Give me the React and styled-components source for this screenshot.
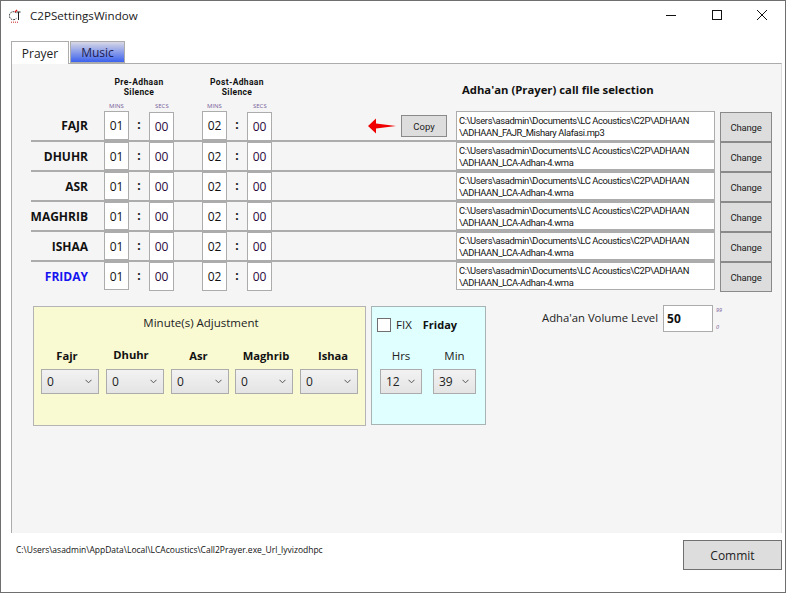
import React from 'react';
import styled, { createGlobalStyle } from 'styled-components';

const PATH_ROOT = 'C:\\Users\\asadmin\\Documents\\LC Acoustics\\C2P\\ADHAAN';
const DEFAULT_FILE = '\\ADHAAN_LCA-Adhan-4.wma';

const prayers = [
  { name: 'FAJR', file: '\\ADHAAN_FAJR_Mishary Alafasi.mp3', first: true },
  { name: 'DHUHR', file: DEFAULT_FILE },
  { name: 'ASR', file: DEFAULT_FILE },
  { name: 'MAGHRIB', file: DEFAULT_FILE },
  { name: 'ISHAA', file: DEFAULT_FILE },
  { name: 'FRIDAY', file: DEFAULT_FILE, friday: true, last: true },
];

const adjustments = [
  { name: 'Fajr', shift: -6 },
  { name: 'Dhuhr', shift: -8, raised: true },
  { name: 'Asr', shift: -3 },
  { name: 'Maghrib', shift: 4, tight: true },
  { name: 'Ishaa', shift: 8 },
];

export default function App() {
  return (
    <>
      <GlobalStyle />
      <Window>
        <TitleBar>
          <AppIcon viewBox="0 0 14 14">
            <path d="M7.5 4.2A4 4 0 1 0 7.5 9.2" fill="none" stroke="#222" strokeWidth="1" strokeDasharray="1.6 1" />
            <path d="M7.5 3h4M9.5 3v8" stroke="#222" strokeWidth="1" fill="none" />
            <path d="M6 3.2L8 0.8" stroke="#e01010" strokeWidth="1.3" />
            <path d="M2 13.2h7" stroke="#c82020" strokeWidth="1" strokeDasharray="1 1" />
          </AppIcon>
          <Title>C2PSettingsWindow</Title>
          <WindowButtons>
            <svg width="12" height="12" viewBox="0 0 12 12">
              <path d="M1 6.5h10" stroke="#111" strokeWidth="1" />
            </svg>
            <svg width="12" height="12" viewBox="0 0 12 12">
              <rect x="1.5" y="1.5" width="9" height="9" fill="none" stroke="#111" strokeWidth="1" />
            </svg>
            <svg width="12" height="12" viewBox="0 0 12 12">
              <path d="M1 1l10 10M11 1L1 11" stroke="#111" strokeWidth="1" />
            </svg>
          </WindowButtons>
        </TitleBar>

        <Tabs>
          <Tab $active>Prayer</Tab>
          <Tab>Music</Tab>
        </Tabs>

        <Panel>
          <Headings>
            <SilenceHeading>Pre-Adhaan<br />Silence</SilenceHeading>
            <SilenceHeading>Post-Adhaan<br />Silence</SilenceHeading>
            <FileHeading>Adha'an (Prayer) call file selection</FileHeading>
          </Headings>

          <Units>
            <Unit $width={46}>MINS</Unit>
            <Unit $width={52}>SECS</Unit>
            <Unit $width={46}>MINS</Unit>
            <Unit $width={45}>SECS</Unit>
          </Units>

          {prayers.map((p) => (
            <Row key={p.name} $first={p.first}>
              <RowMain $last={p.last}>
                <PrayerName $friday={p.friday}>{p.name}</PrayerName>
                <MinsBox $first={p.first} $gapLeft={16}>01</MinsBox>
                <Colon>:</Colon>
                <SecsBox $first={p.first}>00</SecsBox>
                <MinsBox $gapLeft={28} $tall>02</MinsBox>
                <Colon>:</Colon>
                <SecsBox $first={p.first}>00</SecsBox>
                {p.first && (
                  <CopyGroup>
                    <svg width="29" height="16" viewBox="0 0 29 16">
                      <path d="M0 8L8 0.5V5.5L28 8L8 10.5V15.5Z" fill="#f00000" />
                    </svg>
                    <CopyButton>Copy</CopyButton>
                  </CopyGroup>
                )}
                <PathBox $first={p.first}>
                  {PATH_ROOT}
                  <br />
                  {p.file}
                </PathBox>
              </RowMain>
              <ChangeButton $first={p.first}>Change</ChangeButton>
            </Row>
          ))}

          <Lower>
            <AdjustPanel>
              <AdjustTitle>Minute(s) Adjustment</AdjustTitle>
              <AdjustColumns>
                {adjustments.map((a) => (
                  <AdjustColumn key={a.name} $tight={a.tight}>
                    <AdjustLabel $raised={a.raised} $shift={a.shift}>{a.name}</AdjustLabel>
                    <Select $width={58}>
                      0<Chevron />
                    </Select>
                  </AdjustColumn>
                ))}
              </AdjustColumns>
            </AdjustPanel>

            <FixPanel>
              <FixRow>
                <CheckBox />
                <FixText>FIX</FixText>
                <FridayText>Friday</FridayText>
              </FixRow>
              <FixColumns>
                <FixColumn>
                  <FixLabel>Hrs</FixLabel>
                  <Select $width={42}>
                    12<Chevron />
                  </Select>
                </FixColumn>
                <FixColumn>
                  <FixLabel>Min</FixLabel>
                  <Select $width={43}>
                    39<Chevron />
                  </Select>
                </FixColumn>
              </FixColumns>
            </FixPanel>

            <Volume>
              <VolumeLabel>Adha'an Volume Level</VolumeLabel>
              <VolumeBox>50</VolumeBox>
              <VolumeRange>
                <span>99</span>
                <span>0</span>
              </VolumeRange>
            </Volume>
          </Lower>
        </Panel>

        <Footer>
          <FooterPath>C:\Users\asadmin\AppData\Local\LCAcoustics\Call2Prayer.exe_Url_lyvizodhpc</FooterPath>
          <CommitButton>Commit</CommitButton>
        </Footer>
      </Window>
    </>
  );
}

const Chevron = () => (
  <ChevronIcon width="7" height="5" viewBox="0 0 7 5">
    <path d="M0.5 0.8L3.5 3.8L6.5 0.8" fill="none" stroke="#555" strokeWidth="1" />
  </ChevronIcon>
);

const GlobalStyle = createGlobalStyle`
  html, body {
    margin: 0;
    padding: 0;
    background: #fff;
  }
  * {
    box-sizing: border-box;
  }
`;

const Window = styled.div`
  width: 786px;
  height: 593px;
  display: flex;
  flex-direction: column;
  background: #fff;
  border: 1px solid #6f6f6f;
  font-family: 'Open Sans', 'Liberation Sans', sans-serif;
  color: #111;
  overflow: hidden;
`;

const TitleBar = styled.div`
  height: 30px;
  display: flex;
  align-items: center;
  padding: 0 0 1px 8px;
  flex-shrink: 0;
`;

const AppIcon = styled.svg`
  width: 14px;
  height: 14px;
`;

const Title = styled.div`
  margin-left: 7px;
  font-size: 11.6px;
  color: #1a1a1a;
`;

const WindowButtons = styled.div`
  margin: -1px 0 0 auto;
  display: flex;
  gap: 33.5px;
  padding-right: 17px;
`;

const Tabs = styled.div`
  height: 32px;
  display: flex;
  align-items: flex-end;
  padding: 10px 0 0 10px;
  gap: 1px;
  flex-shrink: 0;
`;

const Tab = styled.div`
  height: ${(p) => (p.$active ? '23px' : '22px')};
  width: ${(p) => (p.$active ? '58px' : '55px')};
  margin-bottom: ${(p) => (p.$active ? '-1px' : '0')};
  display: flex;
  align-items: center;
  justify-content: center;
  font-size: 12px;
  color: ${(p) => (p.$active ? '#222' : '#1c1c50')};
  background: ${(p) => (p.$active ? '#fff' : 'linear-gradient(#d8d8e4, #3c62ee)')};
  border: 1px solid #acacac;
  border-bottom: ${(p) => (p.$active ? 'none' : '1px solid #acacac')};
  position: relative;
  z-index: 1;
`;

const Panel = styled.div`
  height: 470px;
  margin: 0 3px 0 10px;
  padding: 13px 0 0 0;
  background: #f5f5f5;
  border: 1px solid #acacac;
  border-bottom: none;
  border-right-color: #dcdcdc;
  flex-shrink: 0;
`;

const Headings = styled.div`
  display: flex;
  align-items: flex-start;
  height: 24px;
  padding-left: 78px;
`;

const SilenceHeading = styled.div`
  width: 98px;
  text-align: center;
  font-family: 'Roboto', 'Liberation Sans', sans-serif;
  font-size: 8.5px;
  line-height: 10px;
  font-weight: 700;
  color: #111;
  letter-spacing: 0.35px;
`;

const FileHeading = styled.div`
  margin-left: 176px;
  margin-top: 5px;
  font-size: 11.3px;
  font-weight: 700;
  line-height: 16px;
  color: #111;
`;

const Units = styled.div`
  display: flex;
  height: 10px;
  padding-left: 92px;
`;

const Unit = styled.div`
  width: ${(p) => p.$width}px;
  font-size: 6px;
  line-height: 10px;
  color: #75609a;
  padding-left: 5px;
`;

const Row = styled.div`
  display: flex;
  align-items: flex-start;
  height: ${(p) => (p.$first ? '31px' : '30px')};
  padding-left: 19px;
`;

const RowMain = styled.div`
  width: 684px;
  height: 100%;
  display: flex;
  align-items: flex-start;
  border-bottom: ${(p) => (p.$last ? 'none' : '2px solid #acacac')};
`;

const PrayerName = styled.div`
  width: 57px;
  height: 28px;
  display: flex;
  align-items: center;
  justify-content: flex-end;
  font-size: 12px;
  font-weight: 700;
  white-space: nowrap;
  color: ${(p) => (p.$friday ? '#1414f0' : '#111')};
`;

const TimeBox = styled.div`
  width: 25px;
  background: #fff;
  border: 1px solid #acacac;
  display: flex;
  align-items: center;
  justify-content: center;
  font-size: 12px;
`;

const MinsBox = styled(TimeBox)`
  height: ${(p) => (p.$first || p.$tall ? '29px' : '28px')};
  margin-left: ${(p) => p.$gapLeft}px;
`;

const SecsBox = styled(TimeBox)`
  height: 29px;
  margin-top: ${(p) => (p.$first ? '1px' : '0')};
  color: #2a0a3c;
`;

const Colon = styled.div`
  width: 20px;
  height: 27px;
  display: flex;
  align-items: center;
  justify-content: center;
  font-size: 12px;
  font-weight: 700;
`;

const CopyGroup = styled.div`
  display: flex;
  align-items: center;
  margin: 4px 0 0 96px;
  gap: 4px;
`;

const CopyButton = styled.div`
  width: 46px;
  height: 22px;
  display: flex;
  align-items: center;
  justify-content: center;
  background: #dddddd;
  border: 1px solid #8a8a8a;
  font-family: 'Roboto', 'Liberation Sans', sans-serif;
  font-size: 9.5px;
  color: #222;
`;

const PathBox = styled.div`
  width: 259px;
  height: ${(p) => (p.$first ? '30px' : '28px')};
  margin-left: ${(p) => (p.$first ? '9px' : 'auto')};
  padding: ${(p) => (p.$first ? '3px' : '2px')} 0 0 2px;
  background: #fff;
  border: 1px solid #acacac;
  font-family: 'Roboto', 'Liberation Sans', sans-serif;
  font-size: 9.4px;
  line-height: 12px;
  letter-spacing: -0.38px;
  color: #111;
  white-space: nowrap;
`;

const ChangeButton = styled.div`
  width: 52px;
  height: 30px;
  margin: ${(p) => (p.$first ? '1px' : '0')} 0 0 5px;
  display: flex;
  align-items: center;
  justify-content: center;
  background: #dddddd;
  border: 1px solid #8a8a8a;
  font-family: 'Roboto', 'Liberation Sans', sans-serif;
  font-size: 9.5px;
  letter-spacing: -0.2px;
  color: #222;
`;

const Lower = styled.div`
  display: flex;
  align-items: flex-start;
  margin-top: 14px;
  padding-left: 21px;
`;

const AdjustPanel = styled.div`
  width: 333px;
  height: 120px;
  background: #f9f9d2;
  border: 1px solid #b4b4b4;
  padding: 8px 7px 0;
`;

const AdjustTitle = styled.div`
  text-align: center;
  padding-left: 3px;
  font-size: 11.5px;
  line-height: 16px;
  color: #222;
`;

const AdjustColumns = styled.div`
  display: flex;
  gap: 7px;
  margin-top: 17px;
`;

const AdjustColumn = styled.div`
  width: 58px;
  margin-left: ${(p) => (p.$tight ? '-1px' : '0')};
  display: flex;
  flex-direction: column;
  align-items: center;
`;

const AdjustLabel = styled.div`
  height: 16px;
  line-height: 16px;
  margin: ${(p) => (p.$raised ? '-1px 0 6px' : '0 0 5px')};
  margin-left: ${(p) => p.$shift}px;
  font-size: 11.2px;
  font-weight: 700;
  white-space: nowrap;
`;

const Select = styled.div`
  width: ${(p) => p.$width}px;
  height: 25px;
  display: flex;
  align-items: center;
  justify-content: space-between;
  padding: 0 6px 0 5px;
  background: linear-gradient(#f2f2f2, #e4e4e4);
  border: 1px solid #acacac;
  font-size: 12px;
  color: #222;
`;

const ChevronIcon = styled.svg`
  flex-shrink: 0;
`;

const FixPanel = styled.div`
  width: 115px;
  height: 119px;
  margin-left: 5px;
  background: #e0ffff;
  border: 1px solid #a8b4b4;
  padding: 11px 0 0 5px;
`;

const FixRow = styled.div`
  display: flex;
  align-items: center;
  height: 14px;
`;

const CheckBox = styled.div`
  width: 14px;
  height: 14px;
  background: #fff;
  border: 1px solid #707070;
`;

const FixText = styled.div`
  margin: -2px 0 0 5px;
  font-size: 11.5px;
  color: #222;
`;

const FridayText = styled.div`
  margin: -2px 0 0 11px;
  font-size: 11px;
  font-weight: 700;
`;

const FixColumns = styled.div`
  display: flex;
  gap: 11px;
  margin: 16px 0 0 3px;
`;

const FixColumn = styled.div`
  display: flex;
  flex-direction: column;
  align-items: center;
`;

const FixLabel = styled.div`
  height: 16px;
  line-height: 16px;
  margin-bottom: 5px;
  font-size: 11.5px;
  color: #222;
`;

const Volume = styled.div`
  display: flex;
  align-items: flex-start;
  margin-left: 56px;
  margin-top: -1px;
`;

const VolumeLabel = styled.div`
  margin-top: 5px;
  font-size: 11.3px;
  line-height: 16px;
  color: #222;
  white-space: nowrap;
`;

const VolumeBox = styled.div`
  width: 50px;
  height: 27px;
  margin-left: 5px;
  padding-left: 3px;
  display: flex;
  align-items: center;
  background: #fff;
  border: 1px solid #acacac;
  font-size: 12px;
  font-weight: 700;
`;

const VolumeRange = styled.div`
  height: 27px;
  margin-left: 3px;
  display: flex;
  flex-direction: column;
  justify-content: space-between;
  padding: 1px 0;
  font-size: 5.5px;
  line-height: 8px;
  font-style: italic;
  color: #75609a;
`;

const Footer = styled.div`
  flex: 1;
  display: flex;
  align-items: flex-start;
  justify-content: space-between;
  padding: 7px 3px 0 15px;
`;

const FooterPath = styled.div`
  margin-top: 4px;
  font-size: 8.5px;
  line-height: 12px;
  color: #111;
`;

const CommitButton = styled.div`
  width: 99px;
  height: 30px;
  display: flex;
  align-items: center;
  justify-content: center;
  background: #dddddd;
  border: 1px solid #707070;
  font-size: 12px;
  color: #222;
`;
